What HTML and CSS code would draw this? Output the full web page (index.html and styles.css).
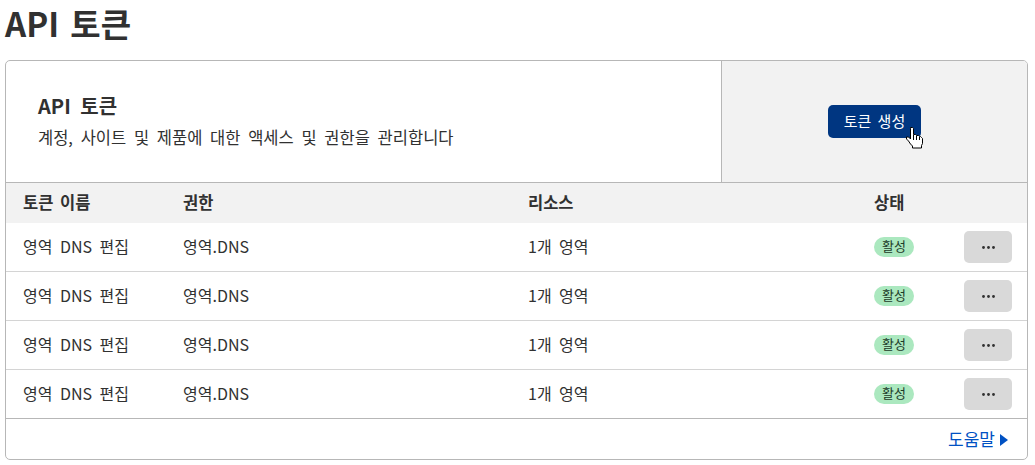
FILE: index.html
```html
<!DOCTYPE html>
<html lang="ko">
<head>
  <meta charset="UTF-8">
  <title>API 토큰</title>
  <link rel="stylesheet" href="styles.css">
</head>
<body>
  <h1>API 토큰</h1>
  <div class="card">
    <div class="card-head">
      <div class="card-intro">
        <h2>API 토큰</h2>
        <p>계정, 사이트 및 제품에 대한 액세스 및 권한을 관리합니다</p>
      </div>
      <div class="card-action">
        <button class="create-btn">토큰 생성
          <svg class="cursor" width="18" height="22" viewBox="0 0 18 22">
            <path d="M5.500 .5h2l1 1v6h2l1 1h2l1 1h1l1 1 1 1v5l-1 2v2.500h-9v-2l-2-2-2-3-2-2v-2h2l2 2v-10.500z" fill="#fff" stroke="#000" stroke-width="1"/>
            <path d="M8.500 8v5M11.500 9v4M14.500 10v3" stroke="#000" stroke-width="1" fill="none"/>
          </svg>
        </button>
      </div>
    </div>
    <div class="row row-head">
      <div>토큰 이름</div>
      <div>권한</div>
      <div>리소스</div>
      <div>상태</div>
      <div></div>
    </div>
    <div class="row">
      <div>영역 DNS 편집</div>
      <div>영역.DNS</div>
      <div>1개 영역</div>
      <div><span class="badge">활성</span></div>
      <div><button class="more-btn"><svg width="13" height="3" viewBox="0 0 13 3"><circle cx="1.500" cy="1.500" r="1.400"/><circle cx="6.500" cy="1.500" r="1.400"/><circle cx="11.500" cy="1.500" r="1.400"/></svg></button></div>
    </div>
    <div class="row">
      <div>영역 DNS 편집</div>
      <div>영역.DNS</div>
      <div>1개 영역</div>
      <div><span class="badge">활성</span></div>
      <div><button class="more-btn"><svg width="13" height="3" viewBox="0 0 13 3"><circle cx="1.500" cy="1.500" r="1.400"/><circle cx="6.500" cy="1.500" r="1.400"/><circle cx="11.500" cy="1.500" r="1.400"/></svg></button></div>
    </div>
    <div class="row">
      <div>영역 DNS 편집</div>
      <div>영역.DNS</div>
      <div>1개 영역</div>
      <div><span class="badge">활성</span></div>
      <div><button class="more-btn"><svg width="13" height="3" viewBox="0 0 13 3"><circle cx="1.500" cy="1.500" r="1.400"/><circle cx="6.500" cy="1.500" r="1.400"/><circle cx="11.500" cy="1.500" r="1.400"/></svg></button></div>
    </div>
    <div class="row row-last">
      <div>영역 DNS 편집</div>
      <div>영역.DNS</div>
      <div>1개 영역</div>
      <div><span class="badge">활성</span></div>
      <div><button class="more-btn"><svg width="13" height="3" viewBox="0 0 13 3"><circle cx="1.500" cy="1.500" r="1.400"/><circle cx="6.500" cy="1.500" r="1.400"/><circle cx="11.500" cy="1.500" r="1.400"/></svg></button></div>
    </div>
    <div class="card-foot">
      <a class="help-link" href="#">도움말<span class="arrow"></span></a>
    </div>
  </div>
</body>
</html>
```

FILE: styles.css
```css
* {
  margin: 0;
  padding: 0;
  box-sizing: border-box;
}

body {
  background: #fff;
  color: #313131;
  font-family: "Noto Sans CJK KR", "Noto Sans", sans-serif;
  font-size: 16px;
  padding: 0 7px 0 5px;
  overflow: hidden;
}

h1 {
  font-size: 33px;
  font-weight: 700;
  line-height: 40px;
  word-spacing: 2px;
  height: 60px;
  padding-top: 3px;
}

.card {
  border: 1px solid #b7b7b7;
  border-radius: 5px;
  height: 400px;
  overflow: hidden;
}

.card-head {
  display: flex;
  height: 122px;
  border-bottom: 1px solid #b7b7b7;
}

.card-intro {
  width: 715px;
  padding: 32px 0 0 32px;
}

.card-intro h2 {
  font-size: 20px;
  font-weight: 700;
  line-height: 26px;
  word-spacing: 4px;
}

.card-intro p {
  font-size: 16.500px;
  line-height: 22px;
  word-spacing: 3.100px;
  margin-top: 7px;
}

.card-action {
  flex: 1;
  background: #f2f2f2;
  border-left: 1px solid #b7b7b7;
  display: flex;
  justify-content: center;
  align-items: center;
}

.create-btn {
  position: relative;
  width: 93px;
  height: 33px;
  padding-bottom: 2px;
  background: #003681;
  color: #fff;
  border: none;
  border-radius: 5px;
  font-family: inherit;
  font-size: 15px;
  word-spacing: 2px;
}

.cursor {
  position: absolute;
  left: 77px;
  top: 22px;
}

.row {
  display: grid;
  grid-template-columns: 160px 345px 346px 90px 1fr;
  align-items: center;
  height: 49px;
  padding-left: 17px;
  padding-bottom: 2px;
  border-bottom: 1px solid #d4d4d4;
  word-spacing: 3px;
}

.row-head {
  height: 40px;
  background: #f2f2f2;
  border-bottom: none;
  font-size: 16.500px;
  font-weight: 700;
  word-spacing: 2px;
}

.row-last {
  border-bottom-color: #b7b7b7;
}

.badge {
  display: block;
  width: 40px;
  height: 20px;
  margin-top: 2px;
  line-height: 18px;
  background: #abe8bf;
  border-radius: 10px;
  color: #1c3a28;
  font-size: 13px;
  text-align: center;
}

.more-btn {
  display: flex;
  justify-content: center;
  align-items: center;
  width: 48px;
  height: 32px;
  margin-top: 2px;
  background: #d9d9d9;
  border: none;
  border-radius: 5px;
  fill: #313131;
}

.card-foot {
  display: flex;
  justify-content: flex-end;
  align-items: center;
  height: 40px;
  padding-right: 19px;
  padding-bottom: 2px;
}

.help-link {
  display: flex;
  align-items: center;
  gap: 5px;
  color: #0051c3;
  font-size: 17px;
  text-decoration: none;
}

.arrow {
  width: 0;
  height: 0;
  margin-top: 3px;
  border-left: 8px solid #0051c3;
  border-top: 6.500px solid transparent;
  border-bottom: 6.500px solid transparent;
}
```
